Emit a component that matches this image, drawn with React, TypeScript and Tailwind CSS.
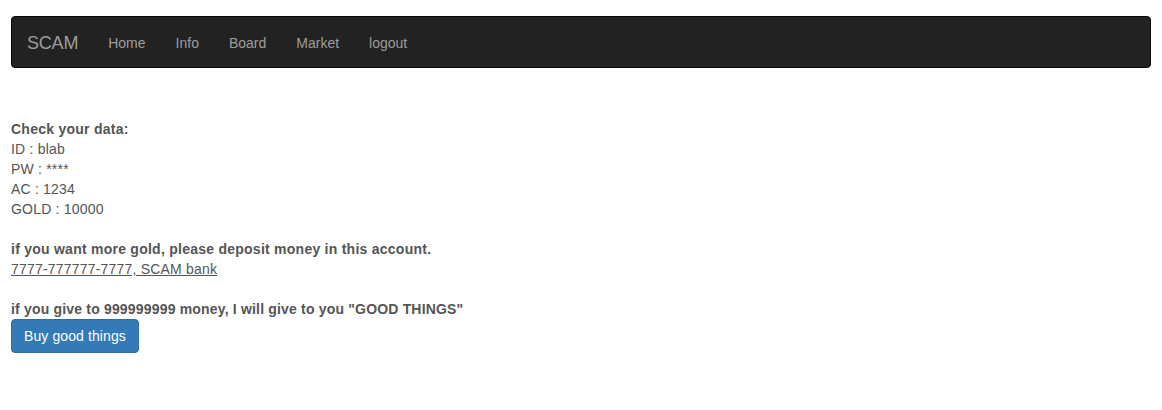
import React from 'react';

const links = ['Home', 'Info', 'Board', 'Market', 'logout'];

export default function App() {
  return (
    <div className="min-h-screen bg-white text-[14px] leading-[20px] text-[#555] font-['Liberation_Sans',Arial,sans-serif]">
      <div className="px-[11px] pt-4">
        <nav className="flex h-[52px] items-stretch rounded border border-[#080808] bg-[#222] pt-[1px]">
          <a className="flex items-center pl-[15px] pr-[15px] text-[18px] tracking-[-0.2px] text-[#9d9d9d]">SCAM</a>
          {links.map((l) => (
            <a key={l} className="flex items-center px-[15px] text-[#9d9d9d]">
              {l}
            </a>
          ))}
        </nav>

        <div className="mt-[51px] tracking-[0.2px]">
          <div className="font-bold tracking-[0.25px]">Check your data:</div>
          <div>ID : blab</div>
          <div>PW : ****</div>
          <div>AC : 1234</div>
          <div>GOLD : 10000</div>
          <div className="h-5" />
          <div className="font-bold tracking-[0.25px]">if you want more gold, please deposit money in this account.</div>
          <a className="underline">7777-777777-7777, SCAM bank</a>
          <div className="h-5" />
          <div className="font-bold tracking-[0.18px]">if you give to 999999999 money, I will give to you "GOOD THINGS"</div>
          <button className="h-[34px] rounded border border-[#2e6da4] bg-[#337ab7] px-3 text-white tracking-[0.1px]">
            Buy good things
          </button>
        </div>
      </div>
    </div>
  );
}
